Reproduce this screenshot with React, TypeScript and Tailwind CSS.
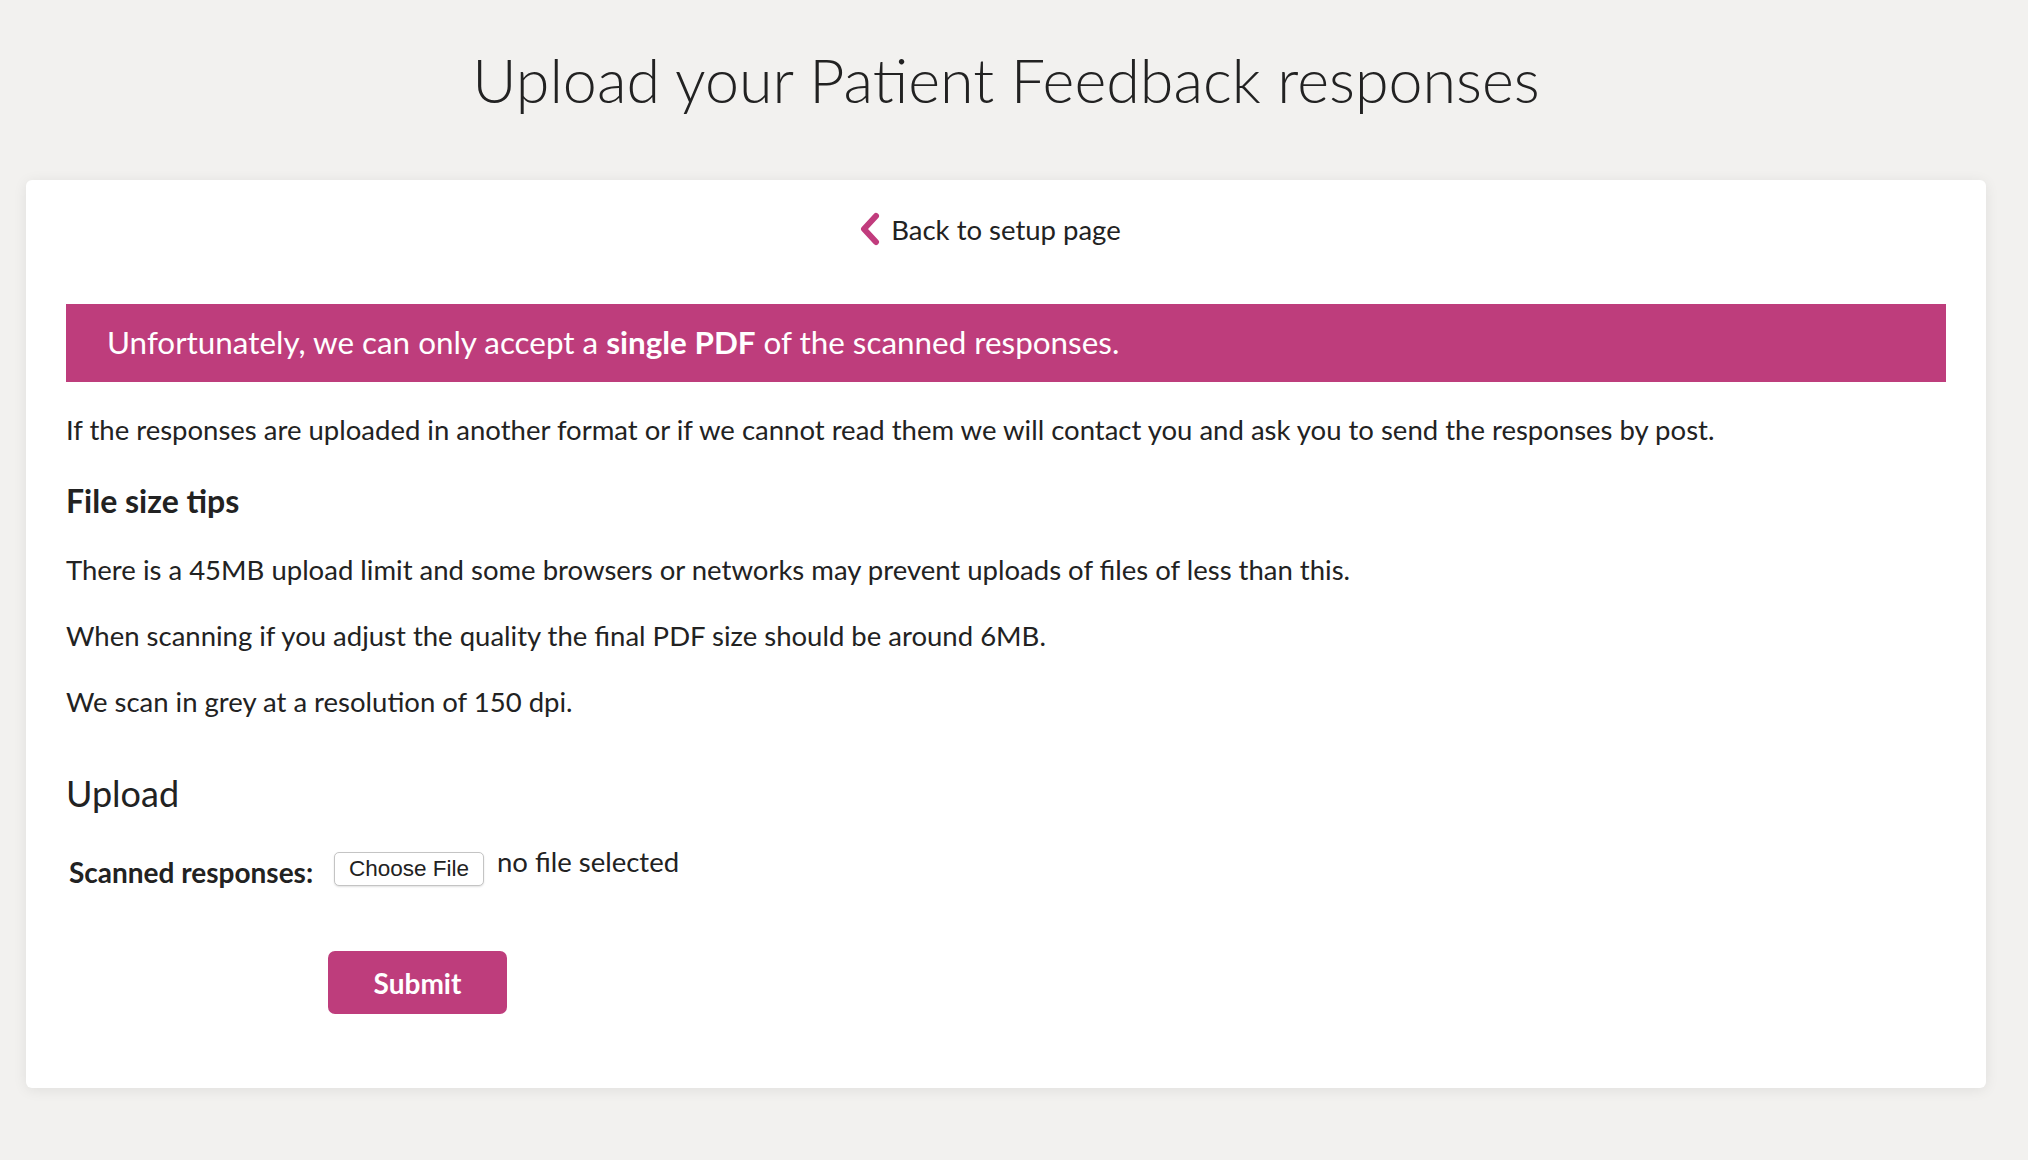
export default function App() {
  return (
    <div className="min-h-[1160px] bg-[#f2f1ef] font-['Lato','Open_Sans',sans-serif] text-[#222]">
      <div className="mr-[16px] pt-[38px] pb-[70px]">
        <h1 className="text-center text-[61px] font-light leading-[84px] text-[#222]">
          Upload your Patient Feedback responses
        </h1>

        <div className="mx-[26px] mt-[58px] rounded-md bg-white px-[40px] pt-[30px] pb-[74px] shadow-[0_2px_14px_rgba(0,0,0,0.08)]">
          <div className="flex justify-center">
            <a href="#" className="relative text-[27.5px] leading-[40px] text-[#222]">
              <svg
                className="absolute top-[2px] left-[-32px]"
                width="22"
                height="34"
                viewBox="0 0 22 34"
                fill="none"
                aria-hidden="true"
              >
                <polyline points="17,4 5,17 17,30" stroke="#c13c7d" strokeWidth="6" strokeLinecap="round" strokeLinejoin="round" />
              </svg>
              Back to setup page
            </a>
          </div>

          <div className="mt-[54px] flex h-[78px] items-center bg-[#be3d7c] px-[41px] text-[31.4px] text-white">
            <p>
              Unfortunately, we can only accept a <strong className="font-bold">single PDF</strong> of the scanned responses.
            </p>
          </div>

          <p className="mt-[28px] text-[27.5px] leading-[40px]">
            If the responses are uploaded in another format or if we cannot read them we will contact you and ask you to send the responses by post.
          </p>

          <h3 className="mt-[29px] text-[32px] font-bold leading-[44px]">File size tips</h3>

          <p className="mt-[27px] text-[27.5px] leading-[40px]">
            There is a 45MB upload limit and some browsers or networks may prevent uploads of files of less than this.
          </p>
          <p className="mt-[26px] text-[27.5px] leading-[40px]">
            When scanning if you adjust the quality the final PDF size should be around 6MB.
          </p>
          <p className="mt-[26px] text-[27.5px] leading-[40px]">We scan in grey at a resolution of 150 dpi.</p>

          <h2 className="mt-[47px] text-[36px] leading-[48px]">Upload</h2>

          <div className="mt-[29px] flex items-start">
            <label className="w-[268px] pl-[3px] pt-[8px] text-[28px] font-bold leading-[36px]">Scanned responses:</label>
            <div className="flex items-start gap-[13px]">
              <button
                type="button"
                className="mt-[6px] h-[34px] w-[150px] rounded-[5px] border border-[#c4c4c4] bg-white font-['Liberation_Sans',Arial,sans-serif] text-[22.5px] leading-[32px] text-[#222] shadow-[0_1px_2px_rgba(0,0,0,0.12)]"
              >
                Choose File
              </button>
              <span className="text-[27.5px] leading-[32px]">no file selected</span>
            </div>
          </div>

          <div className="mt-[61px] pl-[262px]">
            <button
              type="submit"
              className="h-[63px] w-[179px] rounded-[7px] bg-[#be3d7c] text-[28px] font-bold text-white"
            >
              Submit
            </button>
          </div>
        </div>
      </div>
    </div>
  );
}
